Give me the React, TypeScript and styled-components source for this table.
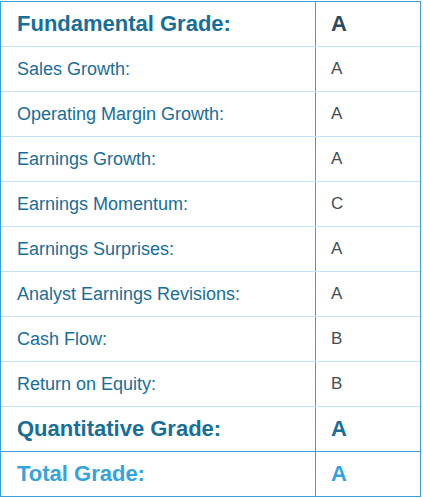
import React from "react"
import styled, { createGlobalStyle } from "styled-components"

const GlobalStyle = createGlobalStyle`
  body {
    margin: 0;
    background: #ffffff;
    font-family: "Liberation Sans", Arial, sans-serif;
  }
`

type Variant = "head" | "row" | "quant" | "total"

const rows: { label: string; grade: string; variant: Variant }[] = [
  { label: "Fundamental Grade:", grade: "A", variant: "head" },
  { label: "Sales Growth:", grade: "A", variant: "row" },
  { label: "Operating Margin Growth:", grade: "A", variant: "row" },
  { label: "Earnings Growth:", grade: "A", variant: "row" },
  { label: "Earnings Momentum:", grade: "C", variant: "row" },
  { label: "Earnings Surprises:", grade: "A", variant: "row" },
  { label: "Analyst Earnings Revisions:", grade: "A", variant: "row" },
  { label: "Cash Flow:", grade: "B", variant: "row" },
  { label: "Return on Equity:", grade: "B", variant: "row" },
  { label: "Quantitative Grade:", grade: "A", variant: "quant" },
  { label: "Total Grade:", grade: "A", variant: "total" },
]

export default function App() {
  return (
    <>
      <GlobalStyle />
      <Page>
        <GradeTable>
          {rows.map((r, i) => (
            <Row key={r.label} $line={i === 0 ? "none" : r.variant === "total" ? "dark" : "light"}>
              <Label $variant={r.variant}>{r.label}</Label>
              <Grade $variant={r.variant}>{r.grade}</Grade>
            </Row>
          ))}
        </GradeTable>
      </Page>
    </>
  )
}

const Page = styled.div`
  padding-top: 1px;
`

const GradeTable = styled.div`
  width: 421px;
  box-sizing: border-box;
  border: 1px solid #3aa0d5;
  display: flex;
  flex-direction: column;
`

const Row = styled.div<{ $line: "none" | "light" | "dark" }>`
  display: grid;
  grid-template-columns: 315px 1fr;
  height: ${(p) => (p.$line === "none" ? "44px" : "45px")};
  box-sizing: border-box;
  border-top: ${(p) =>
    p.$line === "none" ? "none" : p.$line === "dark" ? "1px solid #3aa0d5" : "1px solid #c4e4f3"};
`

const Label = styled.div<{ $variant: Variant }>`
  display: flex;
  align-items: center;
  padding-left: 16px;
  border-right: 1px solid #3aa0d5;
  color: ${(p) => (p.$variant === "total" ? "#33a4dd" : "#176e97")};
  font-size: ${(p) => (p.$variant === "row" ? "18px" : "22px")};
  font-weight: ${(p) => (p.$variant === "row" ? 400 : 700)};
`

const Grade = styled.div<{ $variant: Variant }>`
  display: flex;
  align-items: center;
  padding-left: 15px;
  color: ${(p) =>
    p.$variant === "total" ? "#33a4dd" : p.$variant === "quant" ? "#176e97" : p.$variant === "head" ? "#2c4a5d" : "#444b52"};
  font-size: ${(p) => (p.$variant === "row" ? "17px" : "22px")};
  font-weight: ${(p) => (p.$variant === "row" ? 400 : 700)};
`
